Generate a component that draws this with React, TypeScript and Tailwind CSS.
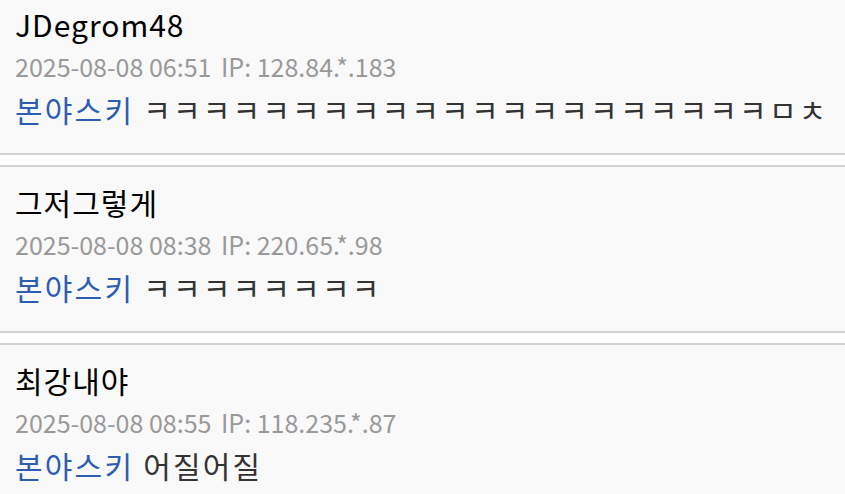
const comments = [
  {
    name: "JDegrom48",
    date: "2025-08-08 06:51",
    ip: "128.84.*.183",
    reply: "본야스키",
    text: "ㅋㅋㅋㅋㅋㅋㅋㅋㅋㅋㅋㅋㅋㅋㅋㅋㅋㅋㅋㅋㅋㅁㅊ",
  },
  {
    name: "그저그렇게",
    date: "2025-08-08 08:38",
    ip: "220.65.*.98",
    reply: "본야스키",
    text: "ㅋㅋㅋㅋㅋㅋㅋㅋ",
  },
  {
    name: "최강내야",
    date: "2025-08-08 08:55",
    ip: "118.235.*.87",
    reply: "본야스키",
    text: "어질어질",
  },
];

function Comment({ name, date, ip, reply, text }: (typeof comments)[number]) {
  return (
    <li className="bg-[#f9f9f9] border-y-2 border-[#d2d2d2] px-[15px] pt-[15px] pb-[22px]">
      <p className="text-[30px] leading-[40px] tracking-[1px] text-black whitespace-nowrap">{name}</p>
      <p className="mt-[3px] text-[25px] leading-[38px] text-[#999] whitespace-nowrap">
        {date} <span className="ml-1">IP: {ip}</span>
      </p>
      <p className="mt-[2px] text-[30px] leading-[44px] tracking-[2.2px] text-[#333] whitespace-nowrap">
        <span className="text-[#2c5db3]">{reply}</span> {text}
      </p>
    </li>
  );
}

export default function App() {
  return (
    <div
      className="w-[845px] h-[494px] overflow-hidden bg-white"
      style={{ fontFamily: '"Noto Sans CJK KR", "Noto Sans", sans-serif' }}
    >
      <ul className="-mt-[13px] flex flex-col gap-[10px]">
        {comments.map((c) => (
          <Comment key={c.date} {...c} />
        ))}
      </ul>
    </div>
  );
}
